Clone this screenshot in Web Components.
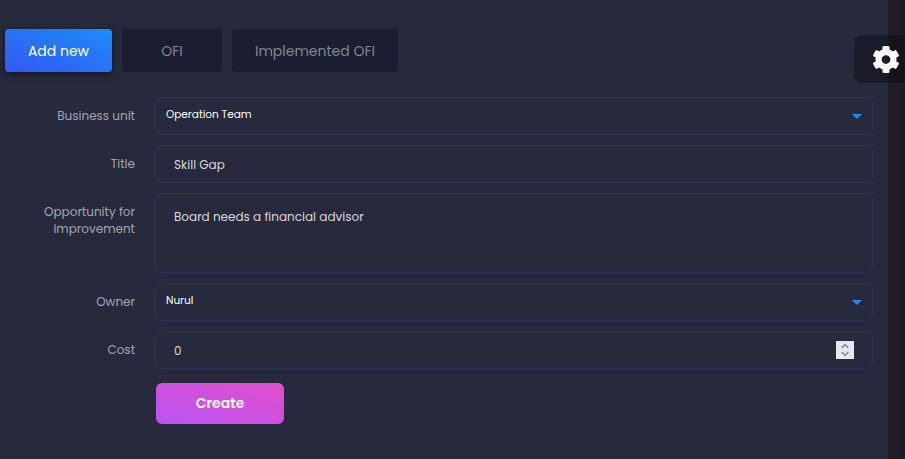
<!DOCTYPE html>
<html lang="en"><head><meta charset="utf-8"><title>Add new OFI</title>
<style>html,body{margin:0;height:100%;overflow:hidden;background:#27293d}body{font-family:Poppins,Inter,"Noto Sans",sans-serif}</style></head>
<body><ofi-page></ofi-page>
<script>
class TabButton extends HTMLElement{
  connectedCallback(){
    this.attachShadow({mode:'open'}).innerHTML=`<style>
    :host{display:flex;box-sizing:border-box;height:43px;padding-top:2px;align-items:center;justify-content:center;border-radius:4px;background:#1a1e30;color:#85868d;font-size:14px;line-height:21px;white-space:nowrap}
    :host([active]){color:#fff;background:linear-gradient(to top right,#3358f4,#1d8cf8);box-shadow:0 2px 6px rgba(0,0,0,.5)}
    </style><slot></slot>`;
  }
}
class FormRow extends HTMLElement{
  connectedCallback(){
    this.attachShadow({mode:'open'}).innerHTML=`<style>
    :host{display:grid;grid-template-columns:135px 718px;column-gap:20px}
    label{padding:10px 0 0 35px;text-align:right;font-size:12px;line-height:17px;color:#a4a5ad}
    </style><label>${this.getAttribute('label')}</label><slot></slot>`;
  }
}
class FormField extends HTMLElement{
  connectedCallback(){
    const k=this.getAttribute('kind');
    const icon=k==='select'?'<svg width="10" height="5" viewBox="0 0 10 5"><path d="M0 0h10L5 5z" fill="#1d8cf8"/></svg>'
      :k==='number'?'<svg width="18" height="18" viewBox="0 0 18 18"><path fill="#e9e8ef" d="M0 0h18v18H0z"/><path d="M5.7 6.8L9 3.7l3.3 3.1M5.7 11.2L9 14.3l3.3-3.1" fill="none" stroke="#8f8e99" stroke-width="1.7"/></svg>':'';
    this.attachShadow({mode:'open'}).innerHTML=`<style>
    :host{display:flex;box-sizing:border-box;height:38px;border:1px solid #2b3553;border-radius:7px;padding:10px 18px 0;justify-content:space-between;align-items:flex-start;font-size:12px;line-height:17px;color:#d8d8dc}
    :host([kind=select]){padding:8px 10px 0;font-size:10.5px;color:#fff}
    :host([kind=area]){height:80px;padding-top:14px}
    svg{display:block;margin-top:-1px}
    :host([kind=select]) svg{margin-top:8px}
    </style><slot></slot>${icon}`;
  }
}
class CreateButton extends HTMLElement{
  connectedCallback(){
    this.attachShadow({mode:'open'}).innerHTML=`<style>
    :host{display:flex;box-sizing:border-box;width:128px;height:41px;padding-bottom:2px;align-items:center;justify-content:center;border-radius:6px;background:linear-gradient(to top right,#ba54f5,#e14eca);color:#fff;font-size:14px;font-weight:600;line-height:20px}
    </style><slot></slot>`;
  }
}
class SettingsTab extends HTMLElement{
  connectedCallback(){
    this.attachShadow({mode:'open'}).innerHTML=`<style>
    :host{display:block;position:absolute;right:0;top:35px;box-sizing:border-box;width:51px;height:48px;padding:10px 0 0 18px;border-radius:7px 0 0 7px;background:rgba(0,0,0,.3)}
    svg{display:block}
    </style><svg width="28" height="29" viewBox="0 0 512 512"><path fill="#fff" d="M487.4 315.7l-42.6-24.6c4.3-23.2 4.3-47 0-70.2l42.6-24.6c4.9-2.8 7.1-8.6 5.5-14-11.1-35.6-30-67.8-54.7-94.6-3.8-4.1-10-5.1-14.8-2.3L380.8 110c-17.9-15.4-38.5-27.3-60.8-35.1V25.8c0-5.6-3.9-10.5-9.4-11.7-36.7-8.2-74.3-7.8-109.2 0-5.5 1.2-9.4 6.1-9.4 11.7V75c-22.2 7.9-42.8 19.8-60.8 35.1L88.7 85.5c-4.9-2.8-11-1.9-14.8 2.3-24.7 26.7-43.6 58.9-54.7 94.6-1.7 5.4.6 11.2 5.5 14L67.3 221c-4.3 23.2-4.3 47 0 70.2l-42.6 24.6c-4.9 2.8-7.1 8.6-5.5 14 11.1 35.6 30 67.8 54.7 94.6 3.8 4.1 10 5.1 14.8 2.3l42.6-24.6c17.9 15.4 38.5 27.3 60.8 35.1v49.2c0 5.6 3.9 10.5 9.4 11.7 36.7 8.2 74.3 7.8 109.2 0 5.5-1.2 9.4-6.1 9.4-11.7v-49.2c22.2-7.9 42.8-19.8 60.8-35.1l42.6 24.6c4.9 2.8 11 1.9 14.8-2.3 24.7-26.7 43.6-58.9 54.7-94.6 1.5-5.5-.7-11.3-5.6-14.1zM256 336c-44.1 0-80-35.9-80-80s35.9-80 80-80 80 35.9 80 80-35.9 80-80 80z"/></svg>`;
  }
}
class OfiPage extends HTMLElement{
  connectedCallback(){
    this.attachShadow({mode:'open'}).innerHTML=`<style>
    :host{display:grid;grid-template-columns:888px 17px;width:905px;height:459px;position:relative}
    main{padding-top:29px}
    nav{display:grid;grid-template-columns:107px 100px 166px;gap:10px;padding-left:5px}
    form{display:flex;flex-direction:column;gap:10px;margin-top:25px}
    create-button{margin:4px 0 0 156px}
    aside{background:linear-gradient(90deg,#1e1e28,#201c26)}
    </style>
    <main><nav>
      <tab-button active>Add new</tab-button>
      <tab-button>OFI</tab-button>
      <tab-button>Implemented OFI</tab-button>
    </nav><form>
      <form-row label="Business unit"><form-field kind="select">Operation Team</form-field></form-row>
      <form-row label="Title"><form-field>Skill Gap</form-field></form-row>
      <form-row label="Opportunity for improvement"><form-field kind="area">Board needs a financial advisor</form-field></form-row>
      <form-row label="Owner"><form-field kind="select">Nurul</form-field></form-row>
      <form-row label="Cost"><form-field kind="number">0</form-field></form-row>
      <create-button>Create</create-button>
    </form></main><aside></aside><settings-tab></settings-tab>`;
  }
}
customElements.define('tab-button',TabButton);
customElements.define('form-row',FormRow);
customElements.define('form-field',FormField);
customElements.define('create-button',CreateButton);
customElements.define('settings-tab',SettingsTab);
customElements.define('ofi-page',OfiPage);
</script></body></html>
